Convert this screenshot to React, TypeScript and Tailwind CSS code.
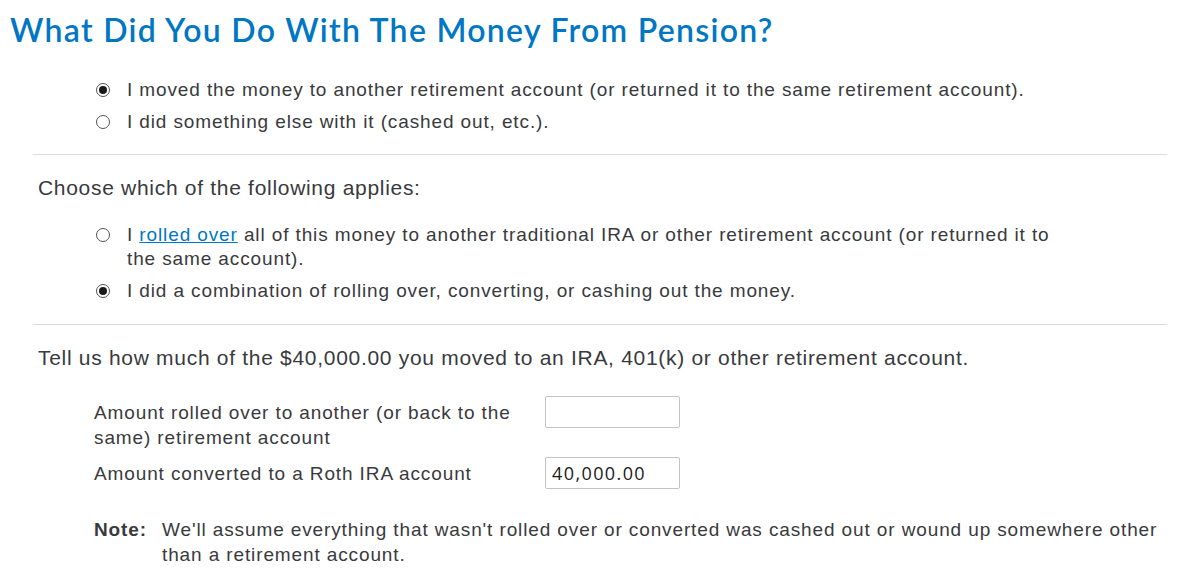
import React from "react";

function Radio({ checked }: { checked?: boolean }) {
  return (
    <span className="mt-[5px] flex h-[14px] w-[14px] shrink-0 items-center justify-center rounded-full border border-[#555555] bg-white">
      {checked && <span className="h-[8px] w-[8px] rounded-full bg-[#1a1a1a]" />}
    </span>
  );
}

function Option({ checked, children }: { checked?: boolean; children: React.ReactNode }) {
  return (
    <label className="flex items-start gap-[17px]">
      <Radio checked={checked} />
      <span>{children}</span>
    </label>
  );
}

export default function App() {
  return (
    <div className="min-h-[579px] w-[1204px] bg-white font-['Liberation_Sans',Arial,sans-serif] text-[19px] leading-[24px] tracking-[0.88px] text-[#393a3d]">
      {/* TITLE */}
      <h1 className="pl-[10px] pt-[10px] font-['Lato','Open_Sans',sans-serif] text-[32px] font-semibold leading-[40px] tracking-[1.3px] text-[#0077c5]">
        What Did You Do With The Money From Pension?
      </h1>

      <div className="px-[33px]">
        {/* FIRST QUESTION */}
        <div className="flex flex-col gap-[8px] pl-[63px] pt-[28px] pb-[20px]">
          <Option checked>
            I moved the money to another retirement account (or returned it to the same retirement account).
          </Option>
          <Option>I did something else with it (cashed out, etc.).</Option>
        </div>

        <div className="h-[1px] w-[1134px] bg-[#dcdcdc]" />

        {/* CHOOSE */}
        <p className="pl-[5px] pt-[20px] text-[21px] leading-[26px] tracking-[0.7px]">Choose which of the following applies:</p>
        <div className="flex flex-col gap-[8px] pl-[63px] pt-[22px] pb-[21px]">
          <Option>
            <span className="block w-[940px]">
              I{" "}
              <a href="#" className="text-[#0077c5] underline">
                rolled over
              </a>{" "}
              all of this money to another traditional IRA or other retirement account (or returned it to the same account).
            </span>
          </Option>
          <Option checked>I did a combination of rolling over, converting, or cashing out the money.</Option>
        </div>

        <div className="h-[1px] w-[1134px] bg-[#dcdcdc]" />

        {/* AMOUNTS */}
        <p className="pl-[5px] pt-[20px] text-[21px] leading-[26px] tracking-[0.7px]">
          Tell us how much of the $40,000.00 you moved to an IRA, 401(k) or other retirement account.
        </p>

        <div className="flex flex-col gap-[7px] pl-[61px] pt-[25px]">
          <div className="flex items-start">
            <span className="w-[451px] pt-[4px] leading-[25px]">
              Amount rolled over to another (or back to the
              <br />
              same) retirement account
            </span>
            <input
              className="h-[32px] w-[135px] rounded-[2px] border border-[#c4c4c4] px-[7px] font-['Open_Sans',sans-serif] text-[18px] tracking-[1.4px] text-[#1a1a1a] outline-none"
              defaultValue=""
            />
          </div>
          <div className="flex items-center">
            <span className="w-[451px] pt-[2px]">Amount converted to a Roth IRA account</span>
            <input
              className="h-[32px] w-[135px] rounded-[2px] border border-[#c4c4c4] px-[6px] font-['Open_Sans',sans-serif] text-[18px] tracking-[1.4px] text-[#1a1a1a] outline-none"
              defaultValue="40,000.00"
            />
          </div>
        </div>

        {/* NOTE */}
        <div className="flex pl-[61px] pt-[28px] leading-[25px]">
          <span className="w-[68px] shrink-0 font-bold">Note:</span>
          <span className="w-[1009px]">
            We'll assume everything that wasn't rolled over or converted was cashed out or wound up somewhere other than a retirement account.
          </span>
        </div>
      </div>
    </div>
  );
}
